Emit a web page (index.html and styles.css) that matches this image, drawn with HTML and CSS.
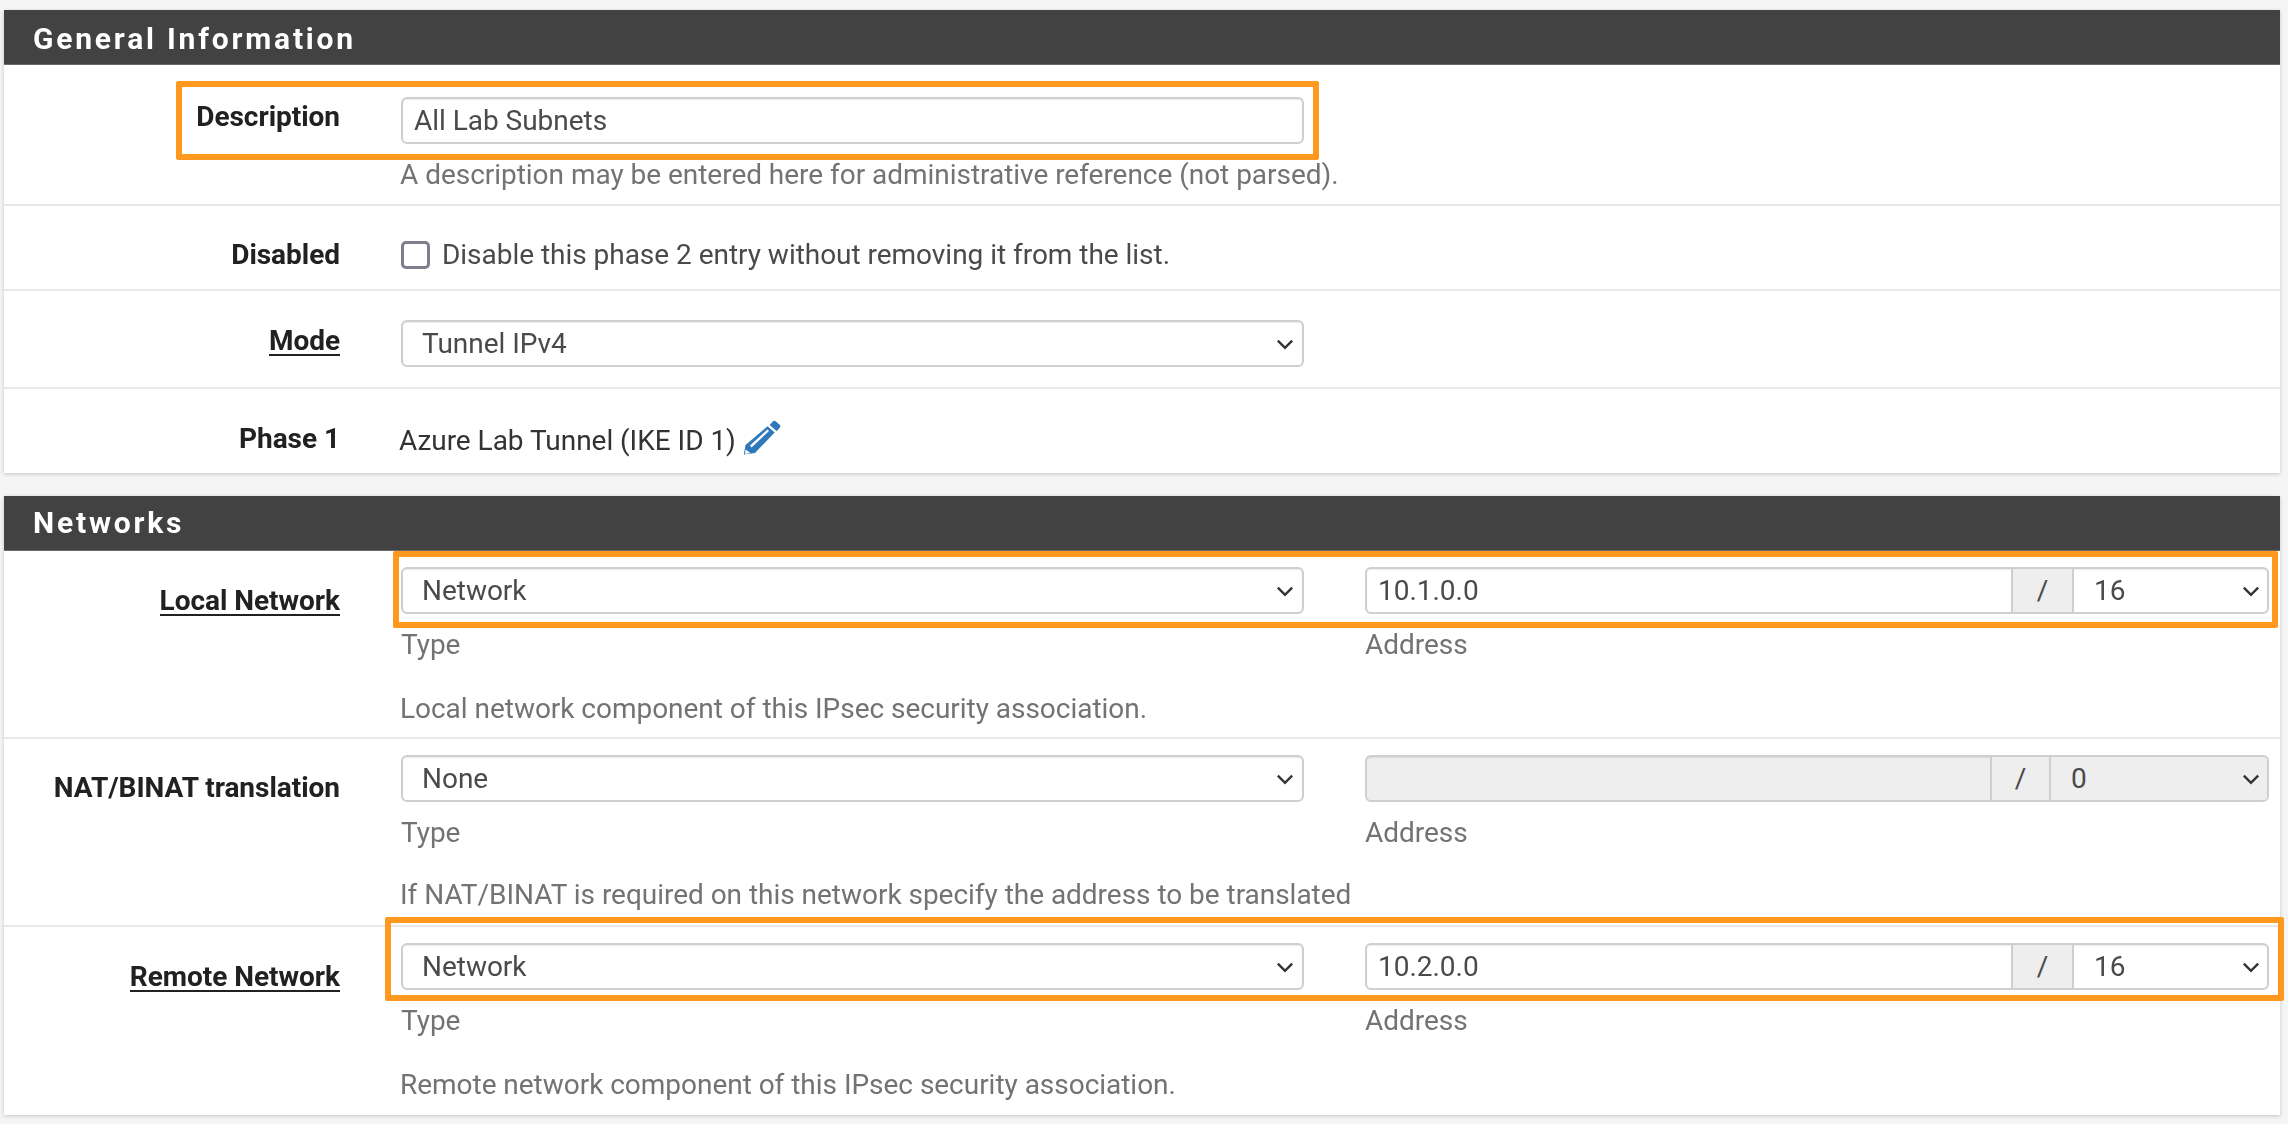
FILE: index.html
```html
<!DOCTYPE html>
<html lang="en">
<head>
<meta charset="utf-8">
<title>IPsec Phase 2</title>
<link rel="stylesheet" href="styles.css">
</head>
<body>
<section class="panel">
  <h2 class="panel-title">General Information</h2>
  <div class="row row-desc">
    <label class="row-label lbl-desc">Description</label>
    <div class="row-body">
      <input class="control" type="text" value="All Lab Subnets">
      <p class="help help-desc">A description may be entered here for administrative reference (not parsed).</p>
    </div>
    <div class="mark mark-desc"></div>
  </div>
  <div class="row row-disabled">
    <label class="row-label">Disabled</label>
    <div class="row-body check-line">
      <span class="checkbox"></span>
      <span>Disable this phase 2 entry without removing it from the list.</span>
    </div>
  </div>
  <div class="row row-mode">
    <label class="row-label lbl-mode"><span class="link-label">Mode</span></label>
    <div class="row-body half">
      <div class="select-wrap">
        <select class="control select"><option>Tunnel IPv4</option></select>
        <svg class="chev" viewBox="0 0 16 10"><path d="M1.5 1.5 8 8l6.5-6.5"/></svg>
      </div>
    </div>
  </div>
  <div class="row row-phase">
    <label class="row-label lbl-phase">Phase 1</label>
    <div class="row-body phase-line">
      <span>Azure Lab Tunnel (IKE ID 1)</span>
      <svg class="pencil" viewBox="0 0 39 35">
        <path class="pen-blue" d="M31 1.2c.8-.6 1.9-.5 2.7.1l4 3.5c.8.7.9 1.9.2 2.7l-3.2 3.8-7-6.2z"/>
        <path class="pen-blue" d="M25.6 6.3 32.6 12.500 13 33 1.800 34.600 3.500 25z"/>
        <path class="pen-white" d="M8 25.500 25.500 9.500 27 11 9.500 27.500z"/>
        <path class="pen-white" d="M3.600 29.500 8.500 33 3 34z"/>
      </svg>
    </div>
  </div>
</section>

<section class="panel panel-net">
  <h2 class="panel-title panel-title-net">Networks</h2>
  <div class="row row-local">
    <label class="row-label lbl-local"><span class="link-label">Local Network</span></label>
    <div class="row-body">
      <div class="fields">
        <div>
          <div class="select-wrap">
            <select class="control select"><option>Network</option></select>
            <svg class="chev" viewBox="0 0 16 10"><path d="M1.5 1.500 8 8l6.500-6.500"/></svg>
          </div>
          <p class="help sub">Type</p>
        </div>
        <div>
          <div class="group">
            <input class="group-input" type="text" value="10.1.0.0">
            <span class="addon">/</span>
            <div class="select-wrap mask">
              <select class="group-select"><option>16</option></select>
              <svg class="chev" viewBox="0 0 16 10"><path d="M1.5 1.500 8 8l6.500-6.500"/></svg>
            </div>
          </div>
          <p class="help sub">Address</p>
        </div>
      </div>
      <p class="help help-local">Local network component of this IPsec security association.</p>
    </div>
    <div class="mark mark-local"></div>
  </div>
  <div class="row row-nat">
    <label class="row-label lbl-nat">NAT/BINAT translation</label>
    <div class="row-body">
      <div class="fields">
        <div>
          <div class="select-wrap">
            <select class="control select"><option>None</option></select>
            <svg class="chev" viewBox="0 0 16 10"><path d="M1.5 1.500 8 8l6.500-6.500"/></svg>
          </div>
          <p class="help sub">Type</p>
        </div>
        <div>
          <div class="group group-off">
            <input class="group-input" type="text" disabled>
            <span class="addon">/</span>
            <div class="select-wrap mask mask-off">
              <select class="group-select" disabled><option>0</option></select>
              <svg class="chev" viewBox="0 0 16 10"><path d="M1.5 1.500 8 8l6.500-6.500"/></svg>
            </div>
          </div>
          <p class="help sub">Address</p>
        </div>
      </div>
      <p class="help help-nat">If NAT/BINAT is required on this network specify the address to be translated</p>
    </div>
  </div>
  <div class="row row-remote">
    <label class="row-label lbl-remote"><span class="link-label">Remote Network</span></label>
    <div class="row-body">
      <div class="fields">
        <div>
          <div class="select-wrap">
            <select class="control select"><option>Network</option></select>
            <svg class="chev" viewBox="0 0 16 10"><path d="M1.5 1.500 8 8l6.500-6.500"/></svg>
          </div>
          <p class="help sub">Type</p>
        </div>
        <div>
          <div class="group">
            <input class="group-input" type="text" value="10.2.0.0">
            <span class="addon">/</span>
            <div class="select-wrap mask">
              <select class="group-select"><option>16</option></select>
              <svg class="chev" viewBox="0 0 16 10"><path d="M1.5 1.500 8 8l6.500-6.500"/></svg>
            </div>
          </div>
          <p class="help sub">Address</p>
        </div>
      </div>
      <p class="help help-remote">Remote network component of this IPsec security association.</p>
    </div>
    <div class="mark mark-remote"></div>
  </div>
</section>
</body>
</html>
```
FILE: styles.css
```css
* { box-sizing: border-box; }
html, body { height: 100%; }
body {
  margin: 0;
  padding: 10px 8px 0 4px;
  background: #f5f5f5;
  color: #333;
  font-family: Roboto, "Liberation Sans", sans-serif;
  font-size: 28px;
  line-height: 28px;
  letter-spacing: -0.03px;
  overflow: hidden;
  filter: blur(0.5px);
}
.panel {
  background: #fff;
  box-shadow: 0 1px 4px rgba(0, 0, 0, .2);
}
.panel-net { margin-top: 23px; }
.panel-title {
  margin: 0;
  height: 55px;
  padding-left: 29px;
  background: #424242;
  border-bottom: 1px solid #6a6a6a;
  color: #fff;
  font-size: 30px;
  font-weight: 700;
  letter-spacing: 2.8px;
  line-height: 57px;
}
.panel-title-net { line-height: 54px; }
.row {
  position: relative;
  display: grid;
  grid-template-columns: 336px 1fr;
  column-gap: 61px;
  border-bottom: 2px solid #e8e8e8;
}
.row-label {
  display: block;
  text-align: right;
  font-weight: 700;
  color: #212121;
}
.link-label {
  display: inline-block;
  line-height: 27px;
  border-bottom: 2.5px solid #212121;
}
.row-desc { padding: 32px 11px 15px 0; }
.row-disabled { padding: 35px 11px 20px 0; }
.row-mode { padding: 29px 11px 20px 0; }
.row-phase { padding: 37px 11px 18px 0; border-bottom: 0; }
.row-local { padding: 16px 11px 14px 0; }
.row-nat { padding: 16px 11px 16px 0; }
.row-remote { padding: 16px 11px 16px 0; border-bottom: 0; }
.lbl-desc { margin-top: 6px; }
.lbl-mode { margin-top: 7px; }
.lbl-phase { margin-top: -1px; }
.lbl-local { margin-top: 20px; }
.lbl-nat { margin-top: 19px; }
.lbl-remote { margin-top: 20px; }
.half { width: 903px; }
.control {
  display: block;
  width: 903px;
  height: 47px;
  padding: 0 11px;
  background: #fff;
  border: 2px solid #cfcfcf;
  border-radius: 6px;
  box-shadow: inset 0 1px 1px rgba(0, 0, 0, .08);
  color: #4a4a4a;
  font: inherit;
  letter-spacing: inherit;
  appearance: none;
  outline: none;
}
.select { padding-left: 19px; }
.select-wrap { position: relative; }
.chev {
  position: absolute;
  top: 19px;
  right: 10px;
  width: 18px;
  height: 11px;
  pointer-events: none;
}
.chev path {
  fill: none;
  stroke: #333;
  stroke-width: 2.2;
}
.help {
  margin: 0;
  color: #737373;
}
.help-desc { margin: 17px 0 0 -1px; }
.sub { margin-top: 17px; }
.help-local { margin: 36px 0 0 -1px; }
.help-nat { margin: 34px 0 0 -1px; }
.help-remote { margin: 36px 0 0 -1px; }
.check-line {
  display: flex;
  align-items: center;
  gap: 12px;
  color: #4a4a4a;
}
.checkbox {
  width: 29px;
  height: 28px;
  background: #fff;
  border: 3px solid #7e7e8c;
  border-radius: 5px;
}
.phase-line {
  display: flex;
  align-items: center;
  color: #333;
  margin-left: -2px;
}
.pencil {
  width: 39px;
  height: 35px;
  margin: -6px 0 0 6px;
}
.pen-blue { fill: #2f78ba; }
.pen-white { fill: #fff; }
.fields {
  display: grid;
  grid-template-columns: 903px 1fr;
  column-gap: 61px;
}
.group {
  display: flex;
  height: 47px;
  border: 2px solid #cfcfcf;
  border-radius: 6px;
  box-shadow: inset 0 1px 1px rgba(0, 0, 0, .08);
  overflow: hidden;
}
.group-input {
  flex: 1;
  min-width: 0;
  padding: 0 11px;
  border: 0;
  background: transparent;
  color: #4a4a4a;
  font: inherit;
  letter-spacing: inherit;
  outline: none;
}
.group-off { background: #eee; }
.addon {
  width: 63px;
  flex: none;
  background: #eee;
  border-left: 2px solid #cfcfcf;
  border-right: 2px solid #cfcfcf;
  color: #4a4a4a;
  text-align: center;
  line-height: 43px;
}
.group-off .addon { width: 61px; }
.mask { width: 193px; flex: none; }
.mask-off { width: 216px; background: #eee; }
.group-select {
  display: block;
  width: 100%;
  height: 43px;
  padding: 0 20px;
  border: 0;
  background: transparent;
  color: #4a4a4a;
  font: inherit;
  letter-spacing: inherit;
  appearance: none;
  outline: none;
  opacity: 1;
}
.mask .chev { top: 17px; right: 7px; }
.mark {
  position: absolute;
  border: 6px solid #ff981e;
  border-radius: 2px;
  pointer-events: none;
}
.mark-desc { left: 172px; width: 1143px; top: 16px; height: 79px; }
.mark-local { left: 389px; width: 1885px; top: 0; height: 77px; }
.mark-remote { left: 381px; width: 1899px; top: -10px; height: 84px; }
```
